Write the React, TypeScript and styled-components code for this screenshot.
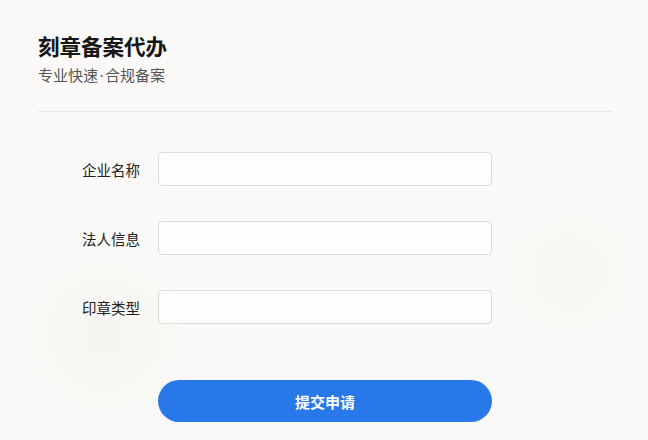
import styled, { createGlobalStyle } from "styled-components";
import { useState } from "react";

const GlobalStyle = createGlobalStyle`
  html, body {
    margin: 0;
    padding: 0;
    background: #faf9f7;
  }
  * {
    box-sizing: border-box;
  }
`;

const PageWrapper = styled.div`
  width: 648px;
  height: 440px;
  overflow: hidden;
  padding: 0 35px 0 38px;
  font-family: "Noto Sans CJK SC", "Noto Sans", sans-serif;
  background:
    radial-gradient(circle at 16% 76%, rgba(238, 235, 228, 0.3), transparent 14%),
    radial-gradient(circle at 88% 62%, rgba(240, 237, 230, 0.25), transparent 12%),
    #faf9f7;
`;

const Header = styled.header`
  padding-top: 29px;
  padding-bottom: 23px;
  border-bottom: 1px solid #e8e7e4;
`;

const Title = styled.h1`
  margin: 0;
  font-size: 21.5px;
  line-height: 34px;
  font-weight: 700;
  color: #161616;
`;

const Subtitle = styled.p`
  margin: -1px 0 0;
  font-size: 15px;
  line-height: 26px;
  color: #555;
`;

// the middle dot is set in a latin face so it stays narrow
const Dot = styled.span`
  font-family: "Noto Sans", sans-serif;
  margin: 0 1.5px;
`;

const Form = styled.form`
  display: flex;
  flex-direction: column;
  padding: 40px 0 0 44px;
  width: 454px;
`;

const Row = styled.label`
  display: grid;
  grid-template-columns: 76px 1fr;
  align-items: center;
  margin-bottom: 35px;
`;

const LabelText = styled.span`
  font-size: 14.5px;
  color: #222;
`;

const Input = styled.input`
  height: 34px;
  border: 1px solid #dcdbd8;
  border-radius: 4px;
  background: #fdfdfc;
  padding: 0 10px;
  font-size: 14px;
  font-family: inherit;
  outline: none;
`;

const SubmitButton = styled.button`
  margin: 21px 0 0 76px;
  height: 42px;
  border: none;
  border-radius: 999px;
  background: #2878ea;
  color: #fff;
  font-family: inherit;
  font-size: 15px;
  font-weight: 700;
  cursor: pointer;
`;

const fields = ["企业名称", "法人信息", "印章类型"];

export default function App() {
  const [values, setValues] = useState<string[]>(["", "", ""]);

  return (
    <>
      <GlobalStyle />
      <PageWrapper>
        <Header>
          <Title>刻章备案代办</Title>
          <Subtitle>
            专业快速<Dot>·</Dot>合规备案
          </Subtitle>
        </Header>
        <Form onSubmit={(e) => e.preventDefault()}>
          {fields.map((name, i) => (
            <Row key={name}>
              <LabelText>{name}</LabelText>
              <Input
                type="text"
                value={values[i]}
                onChange={(e) => {
                  const next = [...values];
                  next[i] = e.target.value;
                  setValues(next);
                }}
              />
            </Row>
          ))}
          <SubmitButton type="submit">提交申请</SubmitButton>
        </Form>
      </PageWrapper>
    </>
  );
}
